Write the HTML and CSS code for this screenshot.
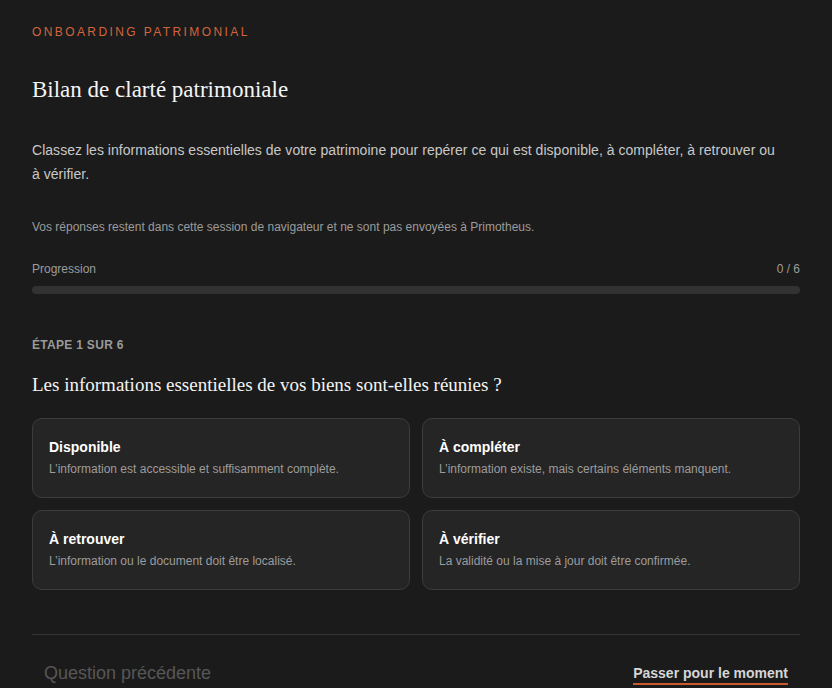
FILE: index.html
```html
<!DOCTYPE html>
<html lang="fr">
<head>
<meta charset="utf-8">
<title>Bilan de clarté patrimoniale</title>
<link rel="stylesheet" href="styles.css">
</head>
<body>
<main class="page">
  <p class="eyebrow">ONBOARDING PATRIMONIAL</p>
  <h1 class="title">Bilan de clarté patrimoniale</h1>
  <p class="intro">Classez les informations essentielles de votre patrimoine pour repérer ce qui est disponible, à compléter, à retrouver ou à vérifier.</p>
  <p class="note">Vos réponses restent dans cette session de navigateur et ne sont pas envoyées à Primotheus.</p>
  <div class="progress-head">
    <span>Progression</span>
    <span>0 / 6</span>
  </div>
  <div class="bar"><div class="bar-fill" style="width:0%"></div></div>

  <p class="step">ÉTAPE 1 SUR 6</p>
  <h2 class="question">Les informations essentielles de vos biens sont-elles réunies ?</h2>

  <div class="options">
    <button class="option">
      <span class="opt-title">Disponible</span>
      <span class="opt-desc">L’information est accessible et suffisamment complète.</span>
    </button>
    <button class="option">
      <span class="opt-title">À compléter</span>
      <span class="opt-desc">L’information existe, mais certains éléments manquent.</span>
    </button>
    <button class="option">
      <span class="opt-title">À retrouver</span>
      <span class="opt-desc">L’information ou le document doit être localisé.</span>
    </button>
    <button class="option">
      <span class="opt-title">À vérifier</span>
      <span class="opt-desc">La validité ou la mise à jour doit être confirmée.</span>
    </button>
  </div>

  <div class="footer">
    <button class="prev">Question précédente</button>
    <button class="skip"><span>Passer pour le moment</span></button>
  </div>
</main>
</body>
</html>
```

FILE: styles.css
```css
html, body {
  margin: 0;
  padding: 0;
  background: #1b1b1b;
}
body {
  font-family: "Liberation Sans", Arial, Helvetica, sans-serif;
  color: #c9c9c9;
}
.page {
  padding: 24px 32px 0;
  max-width: 768px;
}
.eyebrow {
  margin: 0;
  font-size: 12px;
  line-height: 16px;
  letter-spacing: 2.4px;
  color: #d2653d;
}
.title {
  margin: 36px 0 0;
  font-family: "Liberation Serif", "Times New Roman", serif;
  font-weight: 400;
  font-size: 23px;
  line-height: 28px;
  color: #f4f4f4;
}
.intro {
  margin: 34px 0 0;
  max-width: 750px;
  font-size: 14px;
  line-height: 24px;
  letter-spacing: 0.03px;
  color: #c8c8c8;
}
.note {
  margin: 33px 0 0;
  font-size: 12px;
  line-height: 16px;
  color: #9c9c9c;
}
.progress-head {
  margin-top: 26px;
  display: flex;
  justify-content: space-between;
  font-size: 12px;
  line-height: 16px;
  color: #9c9c9c;
}
.bar {
  margin-top: 9px;
  height: 8px;
  border-radius: 4px;
  background: #323232;
  overflow: hidden;
}
.bar-fill {
  height: 100%;
  background: #d2653d;
}
.step {
  margin: 43px 0 0;
  font-size: 12px;
  line-height: 16px;
  font-weight: 700;
  letter-spacing: 0.3px;
  color: #9a9a9a;
}
.question {
  margin: 20px 0 0;
  font-family: "Liberation Serif", "Times New Roman", serif;
  font-weight: 400;
  font-size: 19px;
  line-height: 24px;
  color: #f4f4f4;
}
.options {
  margin-top: 21px;
  display: grid;
  grid-template-columns: 1fr 1fr;
  gap: 12px;
}
.option {
  display: flex;
  flex-direction: column;
  align-items: flex-start;
  box-sizing: border-box;
  height: 80px;
  padding: 19px 16px 0;
  background: #252525;
  border: 1px solid #3c3c3c;
  border-radius: 10px;
  font-family: inherit;
  text-align: left;
  cursor: pointer;
}
.opt-title {
  font-size: 14px;
  line-height: 18px;
  font-weight: 700;
  color: #ffffff;
}
.opt-desc {
  margin-top: 5px;
  font-size: 12px;
  line-height: 16px;
  color: #9c9c9c;
}
.footer {
  margin-top: 44px;
  border-top: 1px solid #333333;
  padding-top: 26px;
  display: flex;
  justify-content: space-between;
  align-items: center;
}
.footer button {
  background: none;
  border: 0;
  padding: 0 12px;
  font-family: inherit;
  cursor: pointer;
}
.prev {
  font-size: 18px;
  line-height: 24px;
  color: #575757;
}
.skip {
  font-size: 14px;
  line-height: 24px;
  font-weight: 700;
  color: #d6d6d6;
}
.skip span {
  padding-bottom: 2px;
  border-bottom: 2px solid #c85a2e;
}
```
